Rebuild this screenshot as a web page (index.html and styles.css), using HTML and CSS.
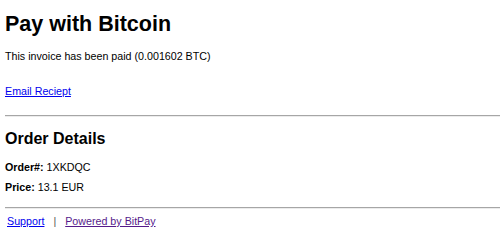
FILE: index.html
```html
<!DOCTYPE html>
<html>
<head>
<meta charset="utf-8">
<title>Pay with Bitcoin</title>
<link rel="stylesheet" href="styles.css">
</head>
<body>
<main class="page">
  <h1 class="title">Pay with Bitcoin</h1>
  <p class="status">This invoice has been paid (0.001602 BTC)</p>
  <p class="receipt"><a href="#" class="link">Email Reciept</a></p>
  <hr class="rule rule-top">
  <h2 class="subtitle">Order Details</h2>
  <p class="detail detail-order"><b>Order#:</b> 1XKDQC</p>
  <p class="detail detail-price"><b>Price:</b> 13.1 EUR</p>
  <hr class="rule rule-bottom">
  <footer class="footer">
    <a href="#" class="link">Support</a>
    <span class="sep">|</span>
    <a href="#" class="link visited">Powered by BitPay</a>
  </footer>
</main>
</body>
</html>
```

FILE: styles.css
```css
html, body {
  margin: 0;
  padding: 0;
  background: #fff;
}

body {
  font-family: "Liberation Sans", Arial, sans-serif;
  font-size: 10.7px;
  line-height: 12px;
  color: #000;
}

.page {
  padding: 0 0 0 5px;
  display: flex;
  flex-direction: column;
}

.title {
  font-size: 21.5px;
  line-height: 26px;
  font-weight: bold;
  margin: 10.5px 0 0;
}

.status {
  margin: 13px 0 0;
}

.receipt {
  margin: 23px 0 0;
}

.link {
  color: #0000ee;
  text-decoration: underline;
}

.link.visited {
  color: #551a8b;
}

.rule {
  border: 0;
  border-top: 1px solid #a6a6a6;
  border-bottom: 1px solid #ececec;
  height: 0;
  margin: 0;
}

.rule-top {
  margin-top: 18.5px;
}

.subtitle {
  font-size: 16px;
  line-height: 18px;
  font-weight: bold;
  margin: 12.5px 0 0;
}

.detail {
  margin: 0;
}

.detail-order {
  margin-top: 13px;
}

.detail-price {
  margin-top: 8px;
}

.rule-bottom {
  margin-top: 14.5px;
}

.footer {
  margin-top: 6px;
  padding-left: 2px;
  display: flex;
  align-items: baseline;
}

.sep {
  color: #555;
  margin: 0 9px 0 9px;
}
```
